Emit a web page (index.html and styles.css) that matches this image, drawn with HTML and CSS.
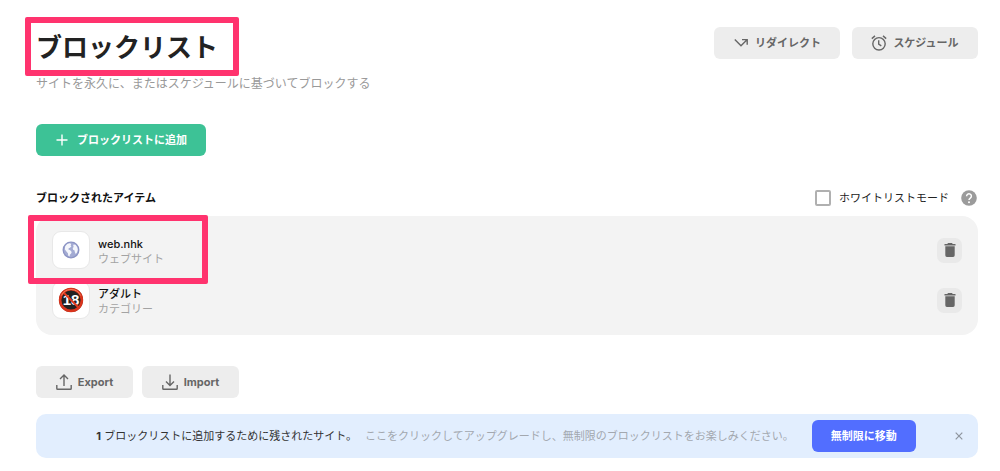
FILE: index.html
```html
<!DOCTYPE html>
<html lang="ja">
<head>
<meta charset="utf-8">
<meta name="viewport" content="width=device-width, initial-scale=1">
<title>ブロックリスト</title>
<link rel="stylesheet" href="styles.css">
</head>
<body>
<main class="page">
  <header class="header">
    <div class="heading">
      <h1 class="title">ブロックリスト</h1>
      <p class="subtitle">サイトを永久に、またはスケジュールに基づいてブロックする</p>
      <span class="marker marker-title"></span>
    </div>
    <div class="actions">
      <button class="btn btn-wide" type="button">
        <svg width="16" height="16" viewBox="0 0 16 16" fill="none" stroke="currentColor" stroke-width="1.4"><path d="M1.8 4.6 8 10.800l6-6M9 4.600h5.200v5.200"/></svg>
        リダイレクト
      </button>
      <button class="btn btn-wide" type="button">
        <svg width="16" height="16" viewBox="0 0 16 16" fill="none" stroke="currentColor" stroke-width="1.4"><circle cx="8" cy="8.800" r="6.200"/><path d="M7.700 5.200v4l2.600 1.700M.8 3.600 4 .9M15.200 3.600 12 .9"/></svg>
        スケジュール
      </button>
    </div>
  </header>

  <button class="btn btn-add" type="button">
    <svg width="14" height="14" viewBox="0 0 14 14" fill="none" stroke="currentColor" stroke-width="1.4"><path d="M7 1.500v11M1.500 7h11"/></svg>
    ブロックリストに追加
  </button>

  <section class="blocked">
    <div class="list-head">
      <h2 class="list-title">ブロックされたアイテム</h2>
      <div class="whitelist">
        <input class="check" type="checkbox" id="whitelist">
        <label class="check-label" for="whitelist">ホワイトリストモード</label>
        <button class="help" type="button" aria-label="ヘルプ">
          <svg width="16" height="16" viewBox="0 0 16 16"><circle cx="8" cy="8" r="7.800" fill="#9b9b9b"/><path d="M5.600 6.200a2.400 2.400 0 1 1 3.700 2C8.400 8.800 8 9.100 8 10.100" fill="none" stroke="#fff" stroke-width="1.500"/><circle cx="8" cy="12.200" r="1" fill="#fff"/></svg>
        </button>
      </div>
    </div>
    <ul class="list">
      <li class="item">
        <span class="tile">
          <svg width="18" height="18" viewBox="0 0 18 18"><circle cx="9" cy="9" r="7.800" fill="#a3abd3" stroke="#8b93c4" stroke-width="1.300"/><path d="M3.200 5.200 5.200 3l2.600-.8 1.400.8-.6 1.400.8 1-1.400 1.300-1.300.6-.3 1.200 1.800.8 1.500 1.600-.6 1.600-1.300 1.200-.2 1.700-1.300-.6-.4-2.600-1.500-1.700-1.600-2.300z" fill="#f4f6fc"/><path d="m11.600 3.400 2 .4 1.700 2.400.5 2.600-.8 2.600-1.300 1.600-.9-2-.2-1.500-1.500-.7-.4-1.700 1-1.200-.5-1.100z" fill="#f4f6fc"/></svg>
        </span>
        <div class="item-text"><span class="name">web.nhk</span><span class="kind">ウェブサイト</span></div>
        <button class="trash" type="button" aria-label="web.nhk を削除"><svg width="12" height="16" viewBox="0 0 12 16" fill="#666"><path d="M.5 2H3.300L4 1h4l.7 1h2.800v1.500H.5zM1.300 4.300h9.400v9a1.600 1.600 0 0 1-1.600 1.600H2.900a1.600 1.600 0 0 1-1.600-1.600z"/></svg></button>
      </li>
      <li class="item">
        <span class="tile">
          <svg width="26" height="26" viewBox="0 0 26 26"><circle cx="13" cy="13" r="12" fill="#222"/><text class="age" x="13" y="18" text-anchor="middle">18</text><circle cx="13" cy="13" r="10.900" fill="none" stroke="#d9341c" stroke-width="2.600"/><path d="m5.500 5.500 15 15" stroke="#e23a20" stroke-width="2"/><path d="M3.400 8.500a10.700 10.700 0 0 1 19.200 0" fill="none" stroke="#f27c5c" stroke-width="1"/></svg>
        </span>
        <div class="item-text"><span class="name">アダルト</span><span class="kind">カテゴリー</span></div>
        <button class="trash" type="button" aria-label="アダルト を削除"><svg width="12" height="16" viewBox="0 0 12 16" fill="#666"><path d="M.5 2H3.300L4 1h4l.7 1h2.800v1.500H.5zM1.300 4.300h9.400v9a1.600 1.600 0 0 1-1.600 1.600H2.900a1.600 1.600 0 0 1-1.600-1.600z"/></svg></button>
      </li>
    </ul>
    <span class="marker marker-item"></span>
  </section>

  <div class="transfer">
    <button class="btn btn-file" type="button">
      <svg width="16" height="16" viewBox="0 0 16 16" fill="none" stroke="currentColor" stroke-width="1.400"><path d="M8 12V1M4 5l4-4 4 4M.8 11v3.400a.8.8 0 0 0 .8.800h12.800a.8.8 0 0 0 .8-.8V11"/></svg>
      Export
    </button>
    <button class="btn btn-file" type="button">
      <svg width="16" height="16" viewBox="0 0 16 16" fill="none" stroke="currentColor" stroke-width="1.400"><path d="M8 .5v11M4 7.500l4 4 4-4M.8 11v3.400a.8.8 0 0 0 .8.800h12.800a.8.8 0 0 0 .8-.8V11"/></svg>
      Import
    </button>
  </div>

  <aside class="banner">
    <div class="banner-body">
      <p class="remaining"><b>1</b> ブロックリストに追加するために残されたサイト。</p>
      <p class="upgrade">ここをクリックしてアップグレードし、無制限のブロックリストをお楽しみください。</p>
      <button class="btn btn-go" type="button">無制限に移動</button>
    </div>
    <button class="close" type="button" aria-label="閉じる"><svg width="8" height="8" viewBox="0 0 8 8" stroke="#8e959e" stroke-width="1.200"><path d="m.7.7 6.600 6.600M7.300.7.7 7.300"/></svg></button>
  </aside>
</main>
</body>
</html>
```

FILE: styles.css
```css
* {
  box-sizing: border-box;
}

body {
  margin: 0;
  background: #fff;
  color: #222;
  font: 11px/16px Inter, "Noto Sans CJK JP", sans-serif;
}

h1, h2, p, ul {
  margin: 0;
  padding: 0;
}

button {
  margin: 0;
  padding: 0;
  border: 0;
  background: none;
  font: inherit;
  cursor: pointer;
}

svg {
  display: block;
  flex: none;
}

.page {
  padding: 27px 22px 12px 36px;
}

.header {
  display: flex;
  justify-content: space-between;
  align-items: flex-start;
}

.heading,
.blocked {
  position: relative;
}

.title {
  font-size: 26px;
  line-height: 42px;
  font-weight: 700;
}

.subtitle {
  margin-top: 7px;
  font-size: 12px;
  color: #999;
}

.actions {
  display: flex;
  gap: 12px;
}

.btn {
  display: inline-flex;
  align-items: center;
  justify-content: center;
  gap: 6px;
  height: 32px;
  border-radius: 6px;
  background: #ededed;
  color: #666;
  font-weight: 700;
  white-space: nowrap;
}

.btn-wide {
  width: 126px;
}

.btn-add {
  gap: 8px;
  width: 170px;
  margin-top: 32px;
  background: #3dc296;
  color: #fff;
}

.list-head {
  display: flex;
  justify-content: space-between;
  align-items: center;
  margin-top: 34px;
}

.list-title {
  font-size: 11px;
  font-weight: 700;
  color: #111;
}

.whitelist {
  display: flex;
  align-items: center;
  gap: 8px;
}

.check {
  appearance: none;
  width: 16px;
  height: 16px;
  margin: 0;
  border: 2px solid #b0b0b0;
  border-radius: 2px;
  background: #fff;
}

.check:checked {
  background: #3dc296;
}

.help {
  margin: 0 1px 0 4px;
}

.list {
  display: flex;
  flex-direction: column;
  gap: 12px;
  margin-top: 10px;
  padding: 15px 16px 16px;
  border-radius: 16px;
  background: #f3f3f3;
  list-style: none;
}

.item {
  display: flex;
  align-items: center;
  gap: 8px;
}

.tile {
  display: grid;
  place-items: center;
  width: 38px;
  height: 38px;
  border: 1px solid #e8e8e8;
  border-radius: 9px;
  background: #fff;
}

.age {
  fill: #fff;
  font: 700 15px "Liberation Sans", sans-serif;
}

.item-text {
  display: flex;
  flex-direction: column;
  flex: 1;
  padding-top: 3px;
  line-height: 15px;
}

.name {
  font-weight: 500;
  color: #111;
}

.kind {
  color: #a3a3a3;
}

.trash {
  display: grid;
  place-items: center;
  width: 25px;
  height: 25px;
  border-radius: 7px;
  background: #e9e9e9;
}

.marker {
  position: absolute;
  border: 6px solid #ff336e;
  border-radius: 2px;
  pointer-events: none;
}

.marker-title {
  top: -10px;
  left: -11px;
  width: 214px;
  height: 59px;
}

.marker-item {
  top: 25px;
  left: -8px;
  width: 180px;
  height: 69px;
}

.transfer {
  display: flex;
  gap: 9px;
  margin-top: 31px;
}

.btn-file {
  width: 97px;
}

.banner {
  display: flex;
  align-items: center;
  margin-top: 16px;
  padding: 6px 15px;
  border-radius: 10px;
  background: #e2eefe;
}

.banner-body {
  display: flex;
  flex: 1;
  align-items: center;
  justify-content: center;
  padding-left: 6px;
}

.remaining {
  color: #333;
}

.upgrade {
  margin: 0 18px 0 8px;
  color: #a3a8af;
}

.btn-go {
  width: 104px;
  background: #526eff;
  color: #fff;
}

.close {
  display: inline-flex;
}
```
